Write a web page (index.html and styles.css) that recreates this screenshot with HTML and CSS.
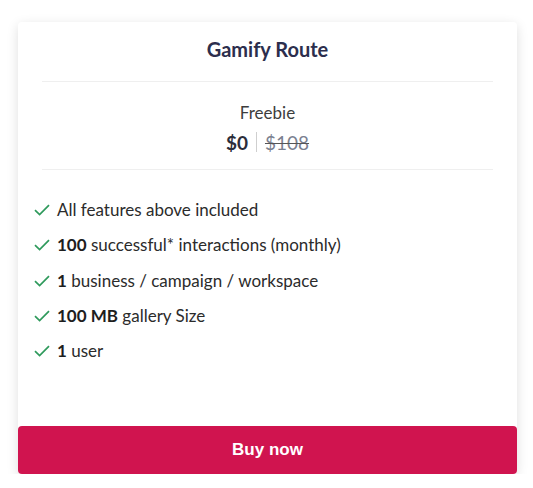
FILE: index.html
```html
<!DOCTYPE html>
<html>
<head>
<meta charset="utf-8">
<link rel="stylesheet" href="styles.css">
</head>
<body>
<div class="card">
  <h2 class="title">Gamify Route</h2>
  <div class="pricing">
    <div class="plan">Freebie</div>
    <div class="price"><span class="now">$0</span><span class="sep"></span><span class="old">$108</span></div>
  </div>
  <ul class="features">
    <li><svg class="check" viewBox="0 0 16 12" width="16" height="12"><path d="M1 6.2 L5.6 10.6 L15 1.2" fill="none" stroke="#2f9a5c" stroke-width="1.7"/></svg><span>All features above included</span></li>
    <li><svg class="check" viewBox="0 0 16 12" width="16" height="12"><path d="M1 6.2 L5.6 10.6 L15 1.2" fill="none" stroke="#2f9a5c" stroke-width="1.7"/></svg><span><b>100</b> successful* interactions (monthly)</span></li>
    <li><svg class="check" viewBox="0 0 16 12" width="16" height="12"><path d="M1 6.2 L5.6 10.6 L15 1.2" fill="none" stroke="#2f9a5c" stroke-width="1.7"/></svg><span><b>1</b> business / campaign / workspace</span></li>
    <li><svg class="check" viewBox="0 0 16 12" width="16" height="12"><path d="M1 6.2 L5.6 10.6 L15 1.2" fill="none" stroke="#2f9a5c" stroke-width="1.7"/></svg><span><b>100 MB</b> gallery Size</span></li>
    <li><svg class="check" viewBox="0 0 16 12" width="16" height="12"><path d="M1 6.2 L5.6 10.6 L15 1.2" fill="none" stroke="#2f9a5c" stroke-width="1.7"/></svg><span><b>1</b> user</span></li>
  </ul>
  <button class="buy">Buy now</button>
</div>
</body>
</html>
```
FILE: styles.css
```css
html, body { margin: 0; padding: 0; background: #fff; }
body { padding: 22px 16px 0 18px; font-family: "Lato", "Liberation Sans", sans-serif; }
.card {
  width: 499px;
  background: #fff;
  border-radius: 4px;
  box-shadow: 0 3px 12px rgba(0,0,0,0.13);
  display: flex;
  flex-direction: column;
}
.title {
  margin: 0 24px;
  padding: 15px 0 0;
  height: 60px;
  box-sizing: border-box;
  text-align: center;
  font-size: 20px;
  font-weight: 700;
  color: #2c2e4d;
  line-height: 24px;
  border-bottom: 1px solid #efefef;
}
.pricing {
  margin: 0 24px;
  border-bottom: 1px solid #efefef;
  text-align: center;
  padding: 21px 0 0;
  height: 88px;
  box-sizing: border-box;
}
.plan { font-size: 17px; color: #3d3d3d; line-height: 20px; font-weight: 400; }
.price { display: flex; justify-content: center; align-items: center; margin-top: 7px; height: 24px; }
.now { font-size: 19px; font-weight: 700; color: #2b2d3a; }
.sep { width: 1px; height: 20px; background: #cfcfcf; margin: 0 8px; }
.old { font-size: 19px; color: #7a8090; text-decoration: line-through; text-decoration-color: #555; }
.features { list-style: none; margin: 0; padding: 30px 0 0 16px; display: flex; flex-direction: column; gap: 15.3px; height: 256px; box-sizing: border-box; }
.features li { display: flex; align-items: center; gap: 7px; font-size: 17px; color: #2b2b2b; line-height: 20px; }
.features b { font-weight: 700; color: #1e1e1e; }
.check { flex: none; }
.buy {
  display: block;
  height: 48px;
  border: none;
  border-radius: 4px;
  background: #d0144f;
  color: #fff;
  font-family: "Liberation Sans", Arial, sans-serif;
  font-weight: 700;
  font-size: 17px;
  cursor: pointer;
}
```
